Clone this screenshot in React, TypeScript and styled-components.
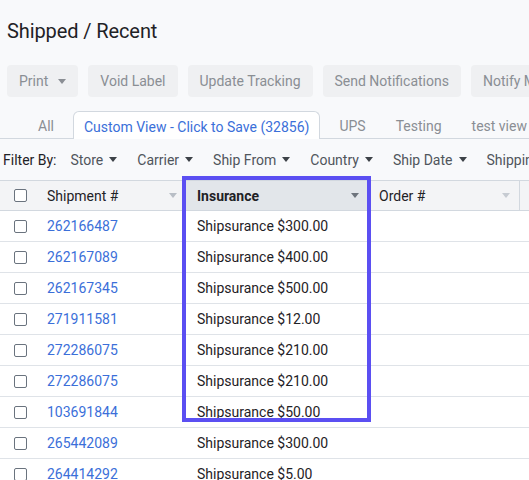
import styled, { createGlobalStyle } from 'styled-components'

const GlobalStyle = createGlobalStyle`
  html, body {
    margin: 0;
    padding: 0;
    background: #f8f9fb;
    font-family: Roboto, 'Liberation Sans', Arial, sans-serif;
    overflow: hidden;
  }
`

const colors = {
  text: '#1f2226',
  muted: '#8a8e94',
  link: '#3b6fd9',
  border: '#d2d8df',
  rowBorder: '#dfe3e8',
  headerBg: '#f3f4f6',
  sortedBg: '#e2e6ea',
  buttonBg: '#eff0f2',
  highlight: '#5b4ff2',
}

const Page = styled.div`
  width: 529px;
  height: 480px;
  overflow: hidden;
  color: ${colors.text};
`

const Title = styled.h1`
  margin: 0;
  padding: 19px 0 0 7px;
  height: 46px;
  box-sizing: border-box;
  font-size: 20px;
  font-weight: 400;
  line-height: 24px;
  letter-spacing: -0.1px;
`

const Toolbar = styled.div`
  display: flex;
  gap: 10px;
  padding: 19px 0 0 7px;
  white-space: nowrap;
`

const ToolButton = styled.button`
  flex-shrink: 0;
  display: flex;
  align-items: center;
  gap: 10px;
  height: 32px;
  padding: 0 12px;
  border: none;
  border-radius: 4px;
  background: ${colors.buttonBg};
  color: ${colors.muted};
  font-family: inherit;
  font-size: 14px;
`

const Caret = styled.span<{ $color?: string; $size?: number }>`
  display: inline-block;
  width: 0;
  height: 0;
  border-left: ${(p) => p.$size ?? 4.5}px solid transparent;
  border-right: ${(p) => p.$size ?? 4.5}px solid transparent;
  border-top: ${(p) => (p.$size ?? 4.5) + 1}px solid ${(p) => p.$color ?? '#444'};
`

const TabBar = styled.div`
  display: flex;
  align-items: flex-end;
  gap: 8px;
  margin-top: 13px;
  padding-left: 27px;
  height: 28px;
  border-bottom: 1px solid ${colors.border};
  white-space: nowrap;
`

const Tab = styled.div<{ $active?: boolean }>`
  flex-shrink: 0;
  height: 28px;
  box-sizing: border-box;
  padding: 2px 10px 0;
  display: flex;
  align-items: center;
  font-size: 14px;
  color: ${(p) => (p.$active ? colors.link : colors.muted)};
  background: ${(p) => (p.$active ? '#fff' : 'transparent')};
  border: 1px solid ${(p) => (p.$active ? colors.border : 'transparent')};
  border-bottom: none;
  border-radius: 6px 6px 0 0;
  margin-bottom: ${(p) => (p.$active ? '-1px' : '0')};
`

const FilterRow = styled.div`
  display: flex;
  align-items: center;
  gap: 20px;
  height: 41px;
  padding-left: 3px;
  font-size: 14px;
  white-space: nowrap;
`

const FilterLabel = styled.span`
  color: ${colors.text};
  margin-right: -6px;
`

const FilterItem = styled.span`
  flex-shrink: 0;
  display: flex;
  align-items: center;
  gap: 6px;
  color: #50555c;
`

const TableWrap = styled.div`
  position: relative;
`

const Table = styled.div`
  background: #fff;
  border-top: 1px solid ${colors.border};
`

const HeaderRow = styled.div`
  display: grid;
  grid-template-columns: 36px 150px 182px 152px 1fr;
  height: 29px;
  background: ${colors.headerBg};
  border-bottom: 1px solid ${colors.border};
`

const Row = styled.div`
  display: grid;
  grid-template-columns: 36px 150px 182px 152px 1fr;
  height: 30px;
  border-bottom: 1px solid ${colors.rowBorder};
`

const HeadCell = styled.div<{ $sorted?: boolean; $divider?: boolean }>`
  display: flex;
  align-items: center;
  justify-content: space-between;
  padding: 0 9px 0 11px;
  font-size: 14px;
  font-weight: ${(p) => (p.$sorted ? 700 : 400)};
  background: ${(p) => (p.$sorted ? colors.sortedBg : 'transparent')};
  border-right: ${(p) => (p.$divider ? `1px solid ${colors.border}` : 'none')};
`

const CheckCell = styled.div`
  display: flex;
  align-items: center;
  justify-content: flex-end;
  padding-right: 9px;
`

const Checkbox = styled.span`
  width: 11px;
  height: 11px;
  border: 1.5px solid #6a737e;
  border-radius: 2px;
  background: #fff;
`

const Cell = styled.div`
  display: flex;
  align-items: center;
  padding-left: 11px;
  font-size: 14px;
`

const Link = styled.a`
  color: ${colors.link};
  text-decoration: none;
`

const Highlight = styled.div`
  position: absolute;
  left: 182px;
  top: -4px;
  width: 189px;
  height: 246px;
  box-sizing: border-box;
  border: 4px solid ${colors.highlight};
  pointer-events: none;
`

const buttons = ['Void Label', 'Update Tracking', 'Send Notifications', 'Notify Marketplace']
const tabs = ['All', 'Custom View - Click to Save (32856)', 'UPS', 'Testing', 'test view']
const filters = ['Store', 'Carrier', 'Ship From', 'Country', 'Ship Date', 'Shipping']

const shipments = [
  ['262166487', '$300.00'],
  ['262167089', '$400.00'],
  ['262167345', '$500.00'],
  ['271911581', '$12.00'],
  ['272286075', '$210.00'],
  ['272286075', '$210.00'],
  ['103691844', '$50.00'],
  ['265442089', '$300.00'],
  ['264414292', '$5.00'],
]

const App = () => {
  return (
    <>
      <GlobalStyle />
      <Page>
        <Title>Shipped / Recent</Title>
        <Toolbar>
          <ToolButton>
            Print <Caret $color='#8a8e94' />
          </ToolButton>
          {buttons.map((b) => (
            <ToolButton key={b}>{b}</ToolButton>
          ))}
        </Toolbar>
        <TabBar>
          {tabs.map((t, i) => (
            <Tab key={t} $active={i === 1}>
              {t}
            </Tab>
          ))}
        </TabBar>
        <FilterRow>
          <FilterLabel>Filter By:</FilterLabel>
          {filters.map((f) => (
            <FilterItem key={f}>
              {f} <Caret $color='#3d4248' $size={4.5} />
            </FilterItem>
          ))}
        </FilterRow>
        <TableWrap>
          <Table>
            <HeaderRow>
              <CheckCell>
                <Checkbox />
              </CheckCell>
              <HeadCell>
                Shipment # <Caret $color='#b8bec6' />
              </HeadCell>
              <HeadCell $sorted>
                Insurance <Caret $color='#6d747c' />
              </HeadCell>
              <HeadCell $divider>
                Order # <Caret $color='#c6cbd2' />
              </HeadCell>
              <HeadCell />
            </HeaderRow>
            {shipments.map(([id, amount], i) => (
              <Row key={i}>
                <CheckCell>
                  <Checkbox />
                </CheckCell>
                <Cell>
                  <Link href='#'>{id}</Link>
                </Cell>
                <Cell>Shipsurance {amount}</Cell>
                <Cell />
                <Cell />
              </Row>
            ))}
          </Table>
          <Highlight />
        </TableWrap>
      </Page>
    </>
  )
}

export default App
